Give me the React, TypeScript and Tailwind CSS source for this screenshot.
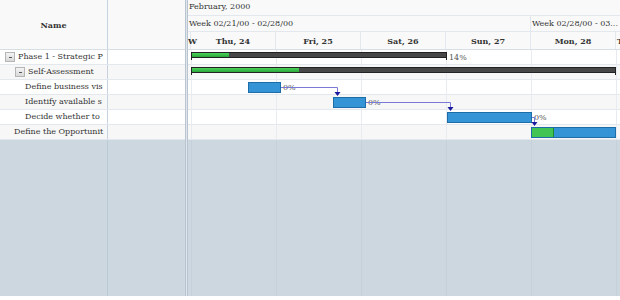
import React from "react";

const font = { fontFamily: '"DejaVu Serif", "Liberation Serif", serif' };

const rows = [
  { name: "Phase 1 - Strategic P", indent: 5, exp: true, alt: false },
  { name: "Self-Assessment", indent: 15, exp: true, alt: true },
  { name: "Define business vis", indent: 25, exp: false, alt: false },
  { name: "Identify available s", indent: 25, exp: false, alt: true },
  { name: "Decide whether to", indent: 25, exp: false, alt: false },
  { name: "Define the Opportunit", indent: 14, exp: false, alt: true },
];

const days = ["Thu, 24", "Fri, 25", "Sat, 26", "Sun, 27", "Mon, 28"];

function Expander() {
  return (
    <span className="mr-[3px] flex h-[10px] w-[10px] shrink-0 items-center justify-center border border-[#b5b5b5] bg-gradient-to-b from-[#f4f4f4] to-[#d9d9d9]">
      <span className="h-px w-[3px] bg-[#555]" />
    </span>
  );
}

function Summary({ left, width, green }: { left: number; width: number; green: number }) {
  return (
    <div className="absolute top-[2px] h-[8px]" style={{ left, width }}>
      <div className="flex h-[6px] w-full border border-[#222] bg-[#474747]">
        <div className="h-full bg-gradient-to-b from-[#4cd45a] to-[#2aa63a]" style={{ width: green }} />
      </div>
      <div className="absolute left-0 top-[5px] h-[3px] w-px bg-[#222]" />
      <div className="absolute right-0 top-[5px] h-[3px] w-px bg-[#222]" />
    </div>
  );
}

function Task({ left, width, green = 0 }: { left: number; width: number; green?: number }) {
  return (
    <div className="absolute top-[2px] flex h-[11px] border border-[#1d6ea8] bg-[#3594d6]" style={{ left, width }}>
      {green > 0 && <div className="h-full border-r border-[#1f8a2e] bg-[#41c453]" style={{ width: green }} />}
    </div>
  );
}

function Label({ left, text }: { left: number; text: string }) {
  return (
    <span className="absolute top-[1px] text-[8px] leading-[13px] text-[#555]" style={{ left }}>
      {text}
    </span>
  );
}

export default function App() {
  const colLines = [3, 88, 173, 258, 343, 428];
  return (
    <div className="flex h-[300px] w-[620px] flex-col overflow-hidden bg-white" style={font}>
      <div className="flex h-[296px] w-full">
        {/* Left grid */}
        <div className="flex w-[185px] shrink-0 flex-col">
          <div className="flex h-[50px] border-b border-[#d6dee6] bg-[#f9f9f9]">
            <div className="flex w-[108px] items-center justify-center border-r border-[#c7d3de] text-[8px] font-bold text-[#333]">
              Name
            </div>
            <div className="flex-1" />
          </div>
          {rows.map((r, i) => (
            <div key={i} className={`flex h-[15px] border-b border-[#e3e8ee] ${r.alt ? "bg-[#f7f7f7]" : "bg-white"}`}>
              <div className="flex w-[108px] items-center border-r border-[#c7d3de] pr-[1px]">
                <div
                  className="flex min-w-0 flex-1 items-center overflow-hidden whitespace-nowrap text-[8px] text-[#333]"
                  style={{ paddingLeft: r.indent }}
                >
                  {r.exp && <Expander />}
                  <span>{r.name}</span>
                </div>
              </div>
              <div className="flex-1" />
            </div>
          ))}
          <div className="flex flex-1 bg-[#cdd7e0]">
            <div className="w-[108px] border-r border-[#bccad6]" />
          </div>
        </div>
        {/* Splitter */}
        <div className="w-[3px] shrink-0 border-x border-[#b8c5d1] bg-[#dfe5eb]" />
        {/* Chart */}
        <div className="relative flex min-w-0 flex-1 flex-col overflow-hidden">
          <div className="flex h-[50px] flex-col border-b border-[#d6dee6] bg-[#f9f9f9] text-[8px] text-[#333]">
            <div className="flex h-[16px] items-center border-b border-[#e3e8ee] pl-[1px]">February, 2000</div>
            <div className="flex h-[17px] border-b border-[#e3e8ee]">
              <div className="flex w-[343px] shrink-0 items-center border-r border-[#e3e8ee] pl-[1px]">Week 02/21/00 - 02/28/00</div>
              <div className="flex min-w-0 flex-1 items-center whitespace-nowrap pl-[1px]">Week 02/28/00 - 03...</div>
            </div>
            <div className="flex h-[17px] whitespace-nowrap">
              <div className="flex w-[3px] shrink-0 items-center overflow-visible border-r border-[#e3e8ee] font-bold">W</div>
              {days.map((d) => (
                <div key={d} className="flex w-[85px] shrink-0 items-center justify-center border-r border-[#e3e8ee] font-bold">
                  {d}
                </div>
              ))}
              <div className="flex items-center pl-[1px] font-bold">T</div>
            </div>
          </div>
          <div className="relative">
            {rows.map((r, i) => (
              <div key={i} className={`relative h-[15px] border-b border-[#e3e8ee] ${r.alt ? "bg-[#f7f7f7]" : "bg-white"}`} />
            ))}
            <div className="pointer-events-none absolute inset-0">
              {colLines.map((x) => (
                <div key={x} className="absolute top-0 h-full w-px bg-[#e8ecf0]" style={{ left: x }} />
              ))}
            </div>
            <div className="absolute inset-0">
              <div className="relative h-[15px]">
                <Summary left={3} width={256} green={37} />
                <Label left={261} text="14%" />
              </div>
              <div className="relative h-[15px]">
                <Summary left={3} width={425} green={107} />
              </div>
              <div className="relative h-[15px]">
                <Task left={60} width={33} />
                <Label left={95} text="0%" />
              </div>
              <div className="relative h-[15px]">
                <Task left={145} width={33} />
                <Label left={180} text="0%" />
              </div>
              <div className="relative h-[15px]">
                <Task left={259} width={85} />
                <Label left={346} text="0%" />
              </div>
              <div className="relative h-[15px]">
                <Task left={343} width={85} green={22} />
              </div>
            </div>
            <svg className="pointer-events-none absolute left-0 top-0" width="432" height="90">
              <g stroke="#7a7ad6" strokeWidth="1" fill="none">
                <path d="M93 37.5 H149.5 V44" />
                <path d="M178 52.5 H262.5 V59" />
                <path d="M344 67.5 H346.5 V74" />
              </g>
              <g fill="#1a1aa0">
                <path d="M146.5 42 H152.5 L149.5 46 Z" />
                <path d="M259.5 57 H265.5 L262.5 61 Z" />
                <path d="M343.5 72 H349.5 L346.5 76 Z" />
              </g>
            </svg>
          </div>
          <div className="relative flex-1 bg-[#cdd7e0]">
            {colLines.map((x) => (
              <div key={x} className="absolute top-0 h-full w-px bg-[#c6d0da]" style={{ left: x }} />
            ))}
          </div>
        </div>
      </div>
    </div>
  );
}
